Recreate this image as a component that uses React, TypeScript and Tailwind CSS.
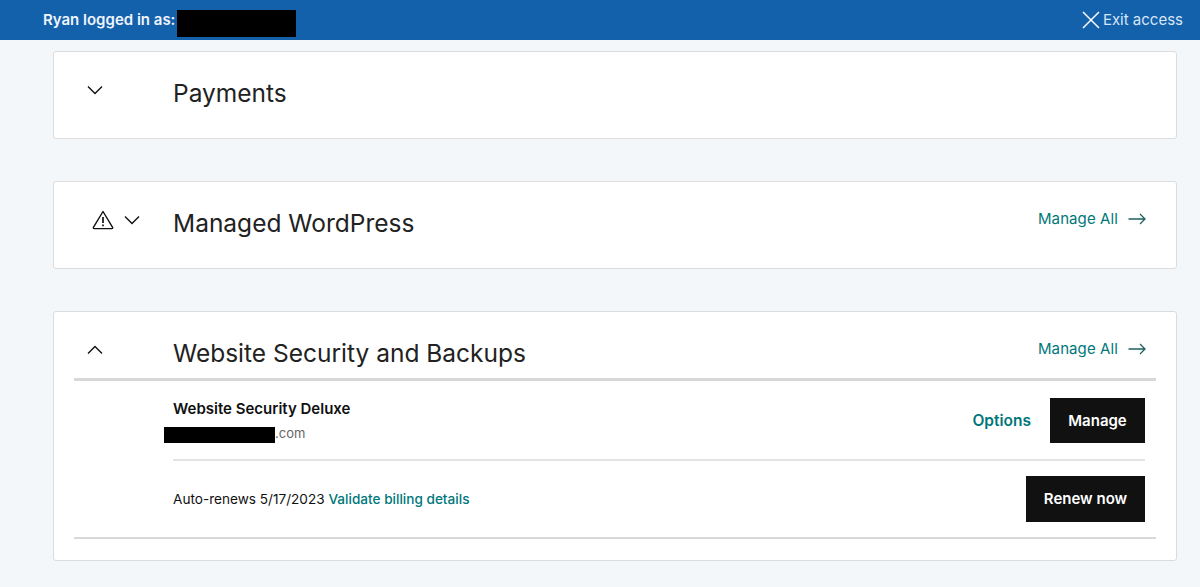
import React from "react";

function Chevron({ up = false }: { up?: boolean }) {
  return (
    <svg width="16" height="10" viewBox="0 0 16 10" fill="none" stroke="#111111" strokeWidth="1.4" aria-hidden>
      <path d={up ? "M1 8.5 8 1.5l7 7" : "M1 1.5l7 7 7-7"} />
    </svg>
  );
}

function Warning() {
  return (
    <svg width="22" height="20" viewBox="0 0 22 20" fill="none" stroke="#111111" strokeWidth="1.4" aria-hidden>
      <path d="M11 1.5 20.6 17.4a.8.8 0 0 1-.7 1.2H2.1a.8.8 0 0 1-.7-1.2L11 1.5z" strokeLinejoin="round" />
      <path d="M11 7v6" strokeWidth="1.7" />
      <path d="M11 14.6v1.7" strokeWidth="1.7" />
    </svg>
  );
}

function ManageAll() {
  return (
    <a className="flex items-center gap-[10px] text-[15px] leading-[22px] tracking-[0.1px] text-[#00777a]">
      Manage All
      <svg width="18" height="12" viewBox="0 0 18 12" fill="none" stroke="#1f5f60" strokeWidth="1.3" aria-hidden>
        <path d="M0.5 6H17M12 1l5 5-5 5" />
      </svg>
    </a>
  );
}

function Card({
  title,
  icon,
  link,
}: {
  title: string;
  icon: React.ReactNode;
  link?: boolean;
}) {
  return (
    <section className="ml-[53px] h-[88px] w-[1124px] rounded-[3px] border border-[#dcdcdc] bg-white">
      <div className="flex items-start">
        <div className="flex h-[75px] w-[119px] shrink-0 items-center">{icon}</div>
        <h2 className="mt-[24px] text-[24.5px] leading-[34px] font-normal text-[#222222]">{title}</h2>
        {link && (
          <div className="mt-[26px] mr-[30px] ml-auto">
            <ManageAll />
          </div>
        )}
      </div>
    </section>
  );
}

export default function App() {
  return (
    <div className="h-[587px] overflow-hidden bg-[#f4f7fa] font-['Inter',sans-serif]">
      <header className="flex h-[40px] items-start justify-between bg-[#1360ab] pr-[17px] pl-[43px] text-white">
        <div className="flex items-start">
          <span className="mt-[10px] text-[15px] leading-[20px] font-semibold text-[#eef4fb]">Ryan logged in as:</span>
          <span className="mt-[10px] ml-[2px] h-[27px] w-[119px] bg-black" />
        </div>
        <div className="mt-[10px] flex items-center gap-[3px]">
          <svg width="18" height="18" viewBox="0 0 18 18" fill="none" stroke="#ffffff" strokeWidth="1.5" aria-hidden>
            <path d="M1 1l16 16M17 1 1 17" />
          </svg>
          <span className="text-[15px] leading-[20px] text-[#d6e6f6]">Exit access</span>
        </div>
      </header>

      <div className="flex flex-col gap-[42px] pt-[11px]">
        <Card
          title="Payments"
          icon={
            <div className="ml-[33px]">
              <Chevron />
            </div>
          }
        />
        <Card
          title="Managed WordPress"
          link
          icon={
            <div className="ml-[38px] flex items-center gap-[10px]">
              <Warning />
              <Chevron />
            </div>
          }
        />
        <section className="ml-[53px] h-[250px] w-[1124px] rounded-[3px] border border-[#dcdcdc] bg-white">
          <div className="flex h-[66px] items-start">
            <div className="flex h-[75px] w-[119px] shrink-0 items-center">
              <div className="ml-[33px]">
                <Chevron up />
              </div>
            </div>
            <h2 className="mt-[24px] text-[24.5px] leading-[34px] font-normal text-[#222222]">Website Security and Backups</h2>
            <div className="mt-[26px] mr-[30px] ml-auto">
              <ManageAll />
            </div>
          </div>
          <div className="mx-[20px] border-t-[3px] border-[#d8d8d8]">
            <div className="mr-[11px] ml-[99px]">
              <div className="flex h-[80px] items-start justify-between border-b-2 border-[#e4e4e4]">
                <div className="pt-[18px]">
                  <div className="text-[15px] leading-[20px] font-semibold text-[#111111]">Website Security Deluxe</div>
                  <div className="mt-[6px] -ml-[9px] flex items-start">
                    <span className="mt-[2px] h-[16px] w-[111px] bg-black" />
                    <span className="text-[13px] leading-[16px] text-[#666666]">.com</span>
                  </div>
                </div>
                <div className="mt-[17px] flex items-center gap-[19px]">
                  <a className="text-[15.5px] font-semibold text-[#00777a]">Options</a>
                  <button className="h-[45px] w-[95px] bg-[#111111] pt-[1px] text-[15px] font-semibold text-white">Manage</button>
                </div>
              </div>
              <div className="flex h-[76px] items-start justify-between">
                <div className="mt-[28px] text-[13.6px] leading-[20px] text-[#111111]">
                  Auto-renews 5/17/2023 <a className="font-medium text-[#00777a]">Validate billing details</a>
                </div>
                <button className="mt-[15px] h-[46px] w-[119px] bg-[#111111] pt-[1px] text-[15px] font-semibold text-white">Renew now</button>
              </div>
            </div>
            <div className="h-[2px] bg-[#d8d8d8]" />
          </div>
        </section>
      </div>
    </div>
  );
}
